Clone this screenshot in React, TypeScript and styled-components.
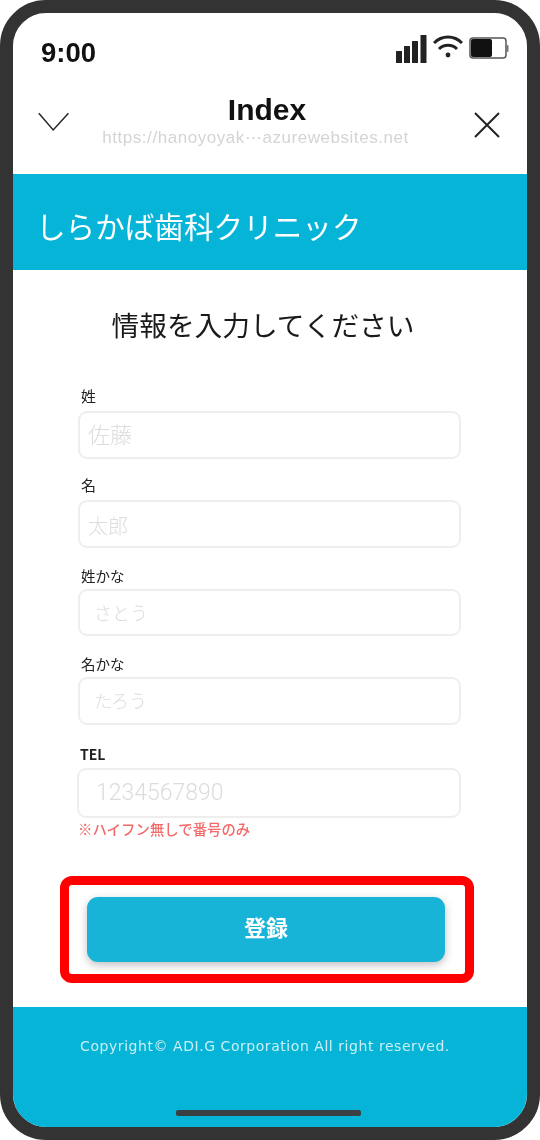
import React from 'react';
import styled, { createGlobalStyle } from 'styled-components';

const GlobalStyle = createGlobalStyle`
  html, body {
    margin: 0;
    padding: 0;
    background: #fff;
  }
  * {
    box-sizing: border-box;
  }
`;

const JP = `"Noto Sans CJK JP", "Noto Sans", sans-serif`;
const LATIN = `"Liberation Sans", Arial, sans-serif`;

const Frame = styled.div`
  width: 540px;
  height: 1140px;
  border: 13px solid #333;
  border-radius: 46px;
  overflow: hidden;
  background: #fff;
  display: flex;
  flex-direction: column;
  filter: blur(0.7px);
`;

const StatusBar = styled.div`
  height: 70px;
  flex-shrink: 0;
  display: flex;
  align-items: flex-start;
  justify-content: space-between;
  padding: 22px 19px 0 28px;
`;

const Clock = styled.span`
  font: 700 27.5px/36px ${LATIN};
  color: #111;
`;

const StatusIcons = styled.div`
  display: flex;
  align-items: flex-start;
  gap: 6px;
  margin-right: -1px;
`;

const NavBar = styled.div`
  height: 91px;
  flex-shrink: 0;
  display: grid;
  grid-template-columns: 84px 1fr 84px;
`;

const NavButton = styled.div<{ $align: 'start' | 'end' }>`
  display: flex;
  justify-content: ${p => (p.$align === 'start' ? 'flex-start' : 'flex-end')};
  padding: ${p => (p.$align === 'start' ? 27 : 29)}px 27px 0 25px;
`;

const NavTitle = styled.div`
  display: flex;
  flex-direction: column;
  align-items: center;
  padding-top: 11px;
  margin-left: -6px;
`;

const PageName = styled.div`
  font: 700 30px/32px ${LATIN};
  color: #111;
`;

const PageUrl = styled.div`
  font: 400 17px/20px ${LATIN};
  letter-spacing: 0.55px;
  color: #d4d4d4;
  white-space: nowrap;
  margin-top: 2px;
  padding-right: 23px;
`;

const Band = styled.header`
  height: 96px;
  flex-shrink: 0;
  background: #05b4d6;
  display: flex;
  align-items: center;
  padding: 8px 0 0 23px;
`;

const ClinicName = styled.h1`
  margin: 0;
  font: 400 29.6px/40px ${JP};
  color: #fff;
  white-space: nowrap;
`;

const Main = styled.main`
  flex: 1;
  display: flex;
  flex-direction: column;
  padding-top: 34px;
`;

const Heading = styled.h2`
  margin: 0 0 0 -14px;
  font: 400 27.7px/40px ${JP};
  color: #1a1a1a;
  text-align: center;
`;

const Form = styled.form`
  margin: 26px 0 0 65px;
  width: 383px;
  display: flex;
  flex-direction: column;
`;

const Field = styled.div<{ $shift?: number }>`
  display: flex;
  flex-direction: column;
  margin-left: ${p => p.$shift ?? 0}px;
`;

const LabelRow = styled.label<{ $height: number; $lift: number; $size: number; $bold?: boolean }>`
  height: ${p => p.$height}px;
  display: flex;
  align-items: flex-end;
  padding: 0 0 ${p => p.$lift}px 3px;
  font: ${p => (p.$bold ? 700 : 400)} ${p => p.$size}px/20px ${JP};
  color: #222;
`;

const TextInput = styled.input<{ $height: number; $inset: number; $size: number; $top?: number; $bottom?: number }>`
  width: 100%;
  height: ${p => p.$height}px;
  border: 2px solid #eeeeee;
  border-radius: 9px;
  background: #fff;
  outline: none;
  padding: ${p => p.$top ?? 0}px 0 ${p => p.$bottom ?? 0}px ${p => p.$inset}px;
  font: 300 ${p => p.$size}px Roboto, ${JP};

  &::placeholder {
    color: #dcdcdc;
    opacity: 1;
  }
`;

const Note = styled.p`
  margin: 0;
  font: 500 14.4px/22px ${JP};
  color: #f36a6a;
  white-space: nowrap;
`;

const Highlight = styled.div`
  align-self: flex-start;
  width: 414px;
  height: 107px;
  margin: 36px 0 0 47px;
  border: 9px solid #ff0000;
  border-radius: 12px;
  padding: 12px 0 0 18px;
`;

const SubmitButton = styled.button`
  display: block;
  width: 358px;
  height: 65px;
  border: none;
  border-radius: 11px;
  padding: 0 0 8px;
  background: #17b4d8;
  box-shadow: 0 3px 8px rgba(0, 0, 0, 0.25);
  color: #fff;
  font: 700 22px ${JP};
`;

const Footer = styled.footer`
  height: 120px;
  flex-shrink: 0;
  background: #05b4d6;
  display: flex;
  flex-direction: column;
  padding-top: 29px;
`;

const Copyright = styled.div`
  font: 400 14px/20px "DejaVu Sans", ${LATIN};
  letter-spacing: 0.55px;
  color: #c9eff7;
  text-align: center;
  white-space: nowrap;
  margin-left: -10px;
`;

const HomeBar = styled.div`
  align-self: flex-start;
  width: 185px;
  height: 6px;
  margin: auto 0 11px 163px;
  border-radius: 2px;
  background: #3a3f44;
`;

const SignalIcon = () => (
  <svg width="31" height="28" viewBox="0 0 31 28" fill="#222">
    <rect x="0" y="16" width="6" height="12" rx="0.5" />
    <rect x="8" y="11" width="6" height="17" rx="0.5" />
    <rect x="16" y="6" width="6" height="22" rx="0.5" />
    <rect x="24.5" y="0" width="6" height="28" rx="0.5" />
  </svg>
);

const WifiIcon = () => (
  <svg width="30" height="24" viewBox="0 0 30 24" fill="none" stroke="#222" strokeWidth="3">
    <path d="M1 8 C9 0 21 0 29 8" />
    <path d="M6 14 C11 9 19 9 24 14" />
    <circle cx="15" cy="20" r="2.4" fill="#222" stroke="none" />
  </svg>
);

const BatteryIcon = () => (
  <svg width="40" height="24" viewBox="0 0 40 24" fill="none">
    <rect x="1" y="3" width="36" height="20" rx="3" stroke="#555" strokeWidth="1.5" />
    <rect x="2" y="4" width="21" height="18" rx="2" fill="#111" />
    <rect x="37.5" y="10" width="2" height="7" rx="1" fill="#777" />
  </svg>
);

const ChevronIcon = () => (
  <svg width="40" height="24" viewBox="0 0 40 24" fill="none" stroke="#222" strokeWidth="1.8">
    <path d="M1 1 L19 22 L38 1" />
  </svg>
);

const CloseIcon = () => (
  <svg width="26" height="26" viewBox="0 0 26 26" fill="none" stroke="#222" strokeWidth="2">
    <path d="M1 1 L25 25 M25 1 L1 25" />
  </svg>
);

type FieldDef = {
  label: string;
  placeholder: string;
  labelHeight: number;
  lift: number;
  labelSize: number;
  bold?: boolean;
  height: number;
  inset: number;
  size: number;
  shift?: number;
  top?: number;
  bottom?: number;
};

const fields: FieldDef[] = [
  { label: '姓', placeholder: '佐藤', labelHeight: 41, lift: 5, labelSize: 15, height: 48, inset: 8, size: 22 },
  { label: '名', placeholder: '太郎', labelHeight: 41, lift: 5, labelSize: 15, height: 48, inset: 8, size: 20, top: 6 },
  { label: '姓かな', placeholder: 'さとう', labelHeight: 41, lift: 3, labelSize: 14.5, height: 47, inset: 14, size: 18, top: 2 },
  { label: '名かな', placeholder: 'たろう', labelHeight: 41, lift: 3, labelSize: 14.5, height: 48, inset: 14, size: 18 },
  { label: 'TEL', placeholder: '1234567890', labelHeight: 43, lift: 4, labelSize: 14, bold: true, height: 50, inset: 17, size: 23, shift: -1, bottom: 2 },
];

export default function App() {
  return (
    <>
      <GlobalStyle />
      <Frame>
        <StatusBar>
          <Clock>9:00</Clock>
          <StatusIcons>
            <SignalIcon />
            <WifiIcon />
            <BatteryIcon />
          </StatusIcons>
        </StatusBar>
        <NavBar>
          <NavButton $align="start">
            <ChevronIcon />
          </NavButton>
          <NavTitle>
            <PageName>Index</PageName>
            <PageUrl>https://hanoyoyak⋯azurewebsites.net</PageUrl>
          </NavTitle>
          <NavButton $align="end">
            <CloseIcon />
          </NavButton>
        </NavBar>
        <Band>
          <ClinicName>しらかば歯科クリニック</ClinicName>
        </Band>
        <Main>
          <Heading>情報を入力してください</Heading>
          <Form onSubmit={e => e.preventDefault()}>
            {fields.map(f => (
              <Field key={f.label} $shift={f.shift}>
                <LabelRow $height={f.labelHeight} $lift={f.lift} $size={f.labelSize} $bold={f.bold}>
                  {f.label}
                </LabelRow>
                <TextInput
                  $height={f.height}
                  $inset={f.inset}
                  $size={f.size}
                  $top={f.top}
                  $bottom={f.bottom}
                  placeholder={f.placeholder}
                />
              </Field>
            ))}
            <Note>※ハイフン無しで番号のみ</Note>
          </Form>
          <Highlight>
            <SubmitButton type="button">登録</SubmitButton>
          </Highlight>
        </Main>
        <Footer>
          <Copyright>Copyright© ADI.G Corporation All right reserved.</Copyright>
          <HomeBar />
        </Footer>
      </Frame>
    </>
  );
}
